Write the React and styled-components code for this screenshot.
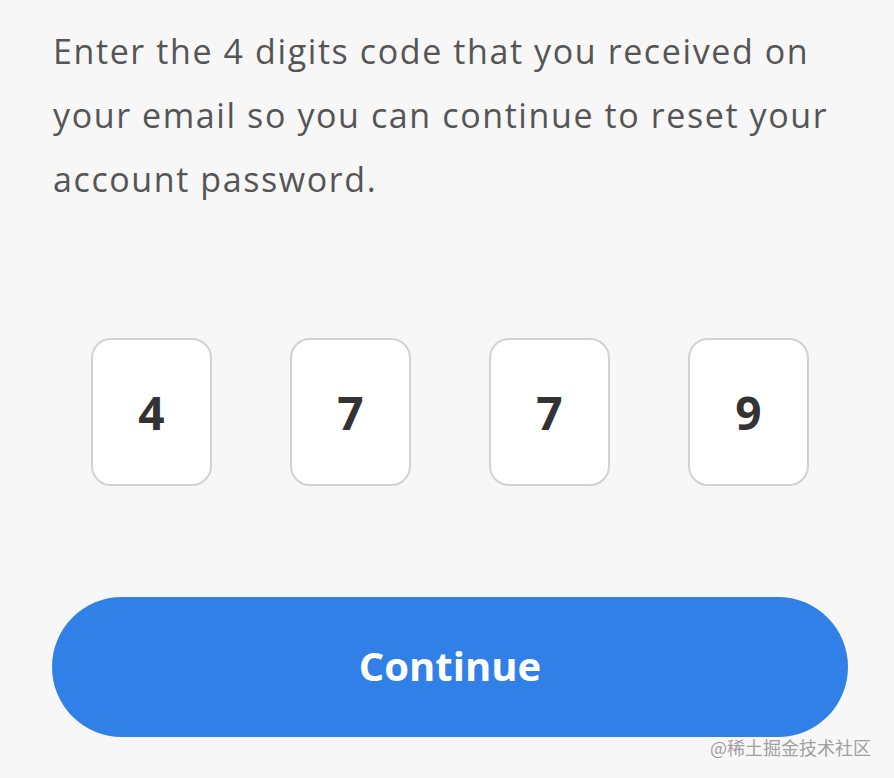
import React from "react";
import styled, { createGlobalStyle } from "styled-components";

const GlobalStyle = createGlobalStyle`
  html, body {
    margin: 0;
    padding: 0;
    background: #f7f7f7;
  }
  body {
    font-family: "Open Sans", "Noto Sans", sans-serif;
  }
`;

const code = ["4", "7", "7", "9"];

const App = () => {
    return (
        <>
            <GlobalStyle />
            <Page>
                <Intro>
                    Enter the 4 digits code that you received on your email so you can
                    continue to reset your account password.
                </Intro>
                <CodeRow>
                    {code.map((digit, i) => (
                        <DigitBox key={i}>{digit}</DigitBox>
                    ))}
                </CodeRow>
                <ContinueButton type="button">Continue</ContinueButton>
                <Watermark>@稀土掘金技术社区</Watermark>
            </Page>
        </>
    );
};

const Page = styled.div`
  position: relative;
  width: 894px;
  height: 778px;
  box-sizing: border-box;
  padding: 19px 46px 0 52px;
  display: flex;
  flex-direction: column;
  overflow: hidden;
`;

const Intro = styled.p`
  margin: 0 0 0 1px;
  width: 785px;
  font-size: 34px;
  letter-spacing: 1.6px;
  line-height: 64px;
  color: #555555;
`;

const CodeRow = styled.div`
  margin-top: 127px;
  display: flex;
  justify-content: space-around;
`;

const DigitBox = styled.div`
  width: 121px;
  height: 148px;
  box-sizing: border-box;
  border: 2px solid #d2d2d2;
  border-radius: 20px;
  background: #ffffff;
  display: flex;
  align-items: center;
  justify-content: center;
  font-size: 46px;
  font-weight: 700;
  color: #333333;
`;

const ContinueButton = styled.button`
  margin-top: 111px;
  width: 796px;
  height: 140px;
  border: none;
  border-radius: 70px;
  background: #3080e8;
  color: #ffffff;
  font-family: "Open Sans", "Noto Sans", sans-serif;
  font-size: 40px;
  font-weight: 700;
  padding: 0 0 4px;
  cursor: pointer;
`;

const Watermark = styled.span`
  position: absolute;
  right: 23px;
  top: 734px;
  font-family: "Noto Sans CJK SC", sans-serif;
  font-size: 18px;
  color: #a0a0a0;
`;

export default App;
